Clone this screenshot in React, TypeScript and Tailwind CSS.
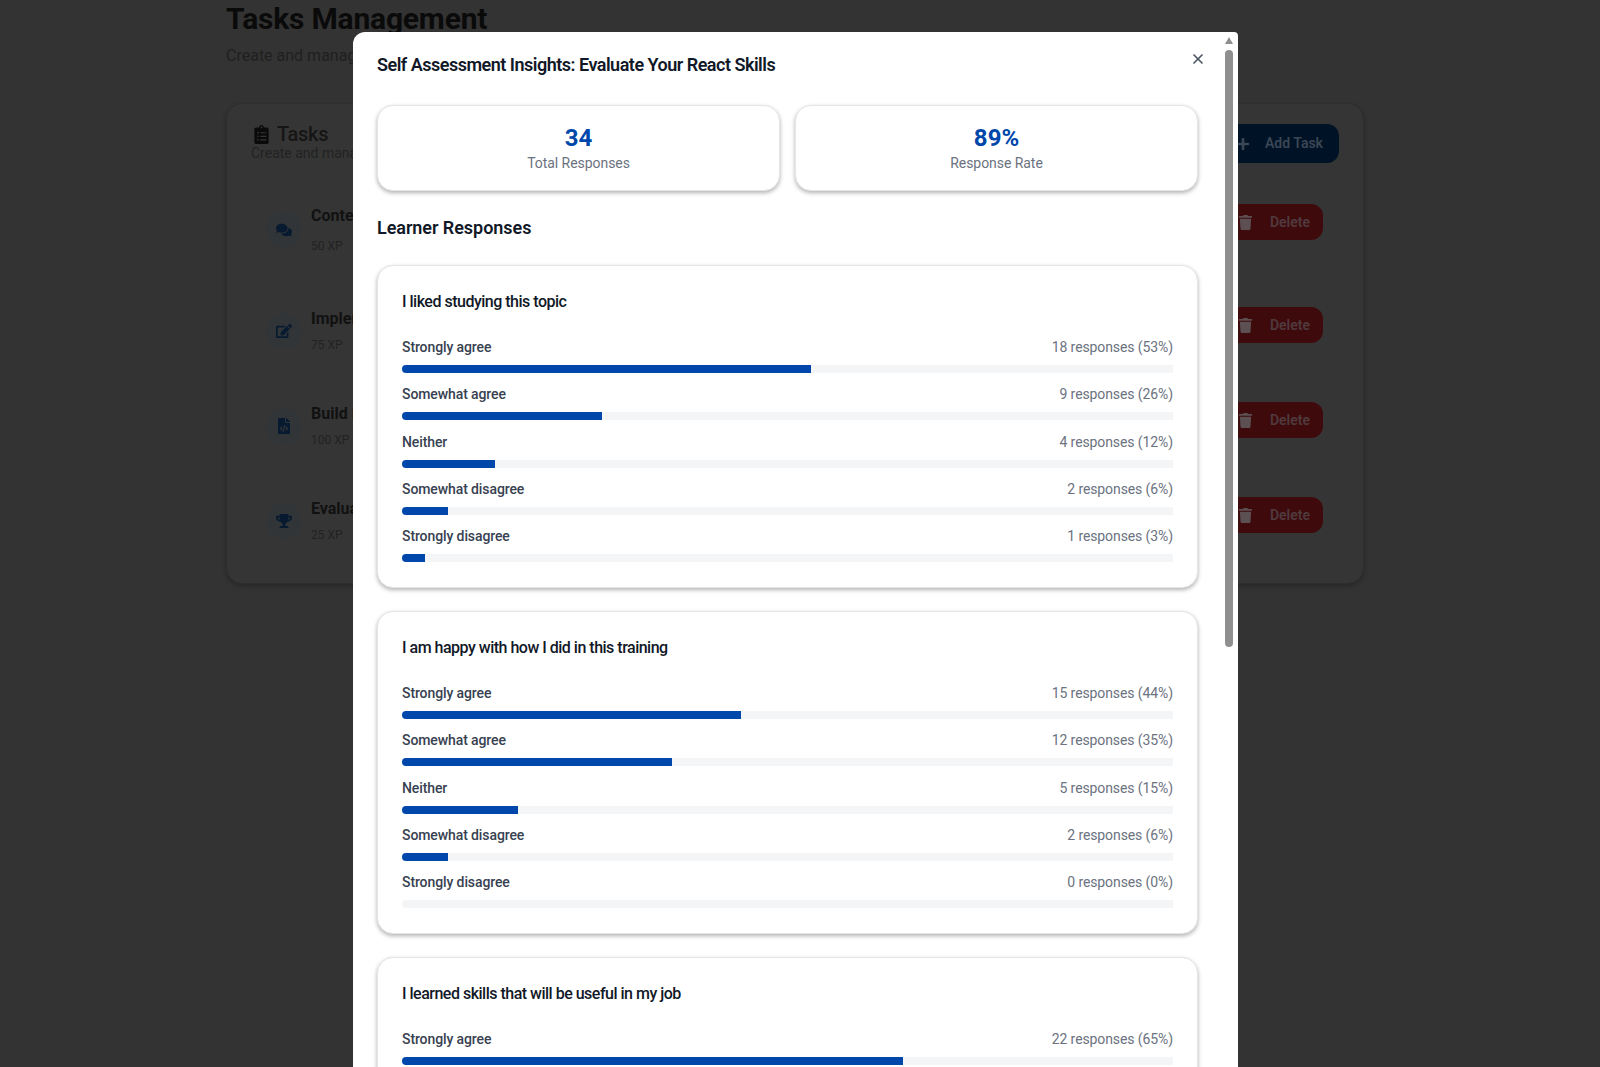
import { FaClipboardList, FaComments, FaEdit, FaFileCode, FaPlus, FaTrash, FaTrophy } from "react-icons/fa";
import { X } from "lucide-react";
import type { ComponentType } from "react";

type Row = { label: string; count: number; pct: number };

const LABELS = ["Strongly agree", "Somewhat agree", "Neither", "Somewhat disagree", "Strongly disagree"];

function rows(values: [number, number][]): Row[] {
  return values.map(([count, pct], i) => ({ label: LABELS[i], count, pct }));
}

const questions = [
  {
    title: "I liked studying this topic",
    rows: rows([[18, 53], [9, 26], [4, 12], [2, 6], [1, 3]]),
  },
  {
    title: "I am happy with how I did in this training",
    rows: rows([[15, 44], [12, 35], [5, 15], [2, 6], [0, 0]]),
  },
  {
    title: "I learned skills that will be useful in my job",
    rows: rows([[22, 65], [8, 24], [3, 9], [1, 3], [0, 0]]),
  },
];

const tasks: { name: string; xp: string; icon: ComponentType<{ size?: number; className?: string }>; h: string; gap: string }[] = [
  { name: "Content Review", xp: "50 XP", icon: FaComments, h: "h-[103px]", gap: "mt-[11px]" },
  { name: "Implement Feature", xp: "75 XP", icon: FaEdit, h: "h-[95px]", gap: "mt-[7px]" },
  { name: "Build Project", xp: "100 XP", icon: FaFileCode, h: "h-[95px]", gap: "mt-[7px]" },
  { name: "Evaluate Skills", xp: "25 XP", icon: FaTrophy, h: "h-[95px]", gap: "mt-[7px]" },
];

function Background() {
  return (
    <div className="h-[1067px] overflow-hidden bg-[#333333] pl-[226px] pr-[236px]">
      <h1 className="mt-[1px] text-[30px] leading-[36px] font-bold tracking-[-0.2px] text-[#0a0a0a]">Tasks Management</h1>
      <p className="mt-[7px] text-[16px] leading-[24px] text-[#202020]">Create and manage tasks for your learners</p>
      <div className="mt-[35px] h-[481px] rounded-[16px] border border-[#2e2e2e] bg-[#353535] pt-[19px] pr-[24px] pl-[24px] shadow-[0_2px_4px_rgba(0,0,0,0.25)]">
        <div className="flex items-start justify-between">
          <div>
            <div className="flex items-center gap-[6px] pl-[1px]">
              <FaClipboardList size={19} className="text-[#0a0a0a]" />
              <span className="text-[20px] leading-[23px] font-medium tracking-[-0.3px] text-[#151515]">Tasks</span>
            </div>
            <p className="text-[14px] leading-[14px] text-[#222222]">Create and manage tasks</p>
          </div>
          <div className="mt-[1px] flex h-[39px] w-[160px] items-center justify-end gap-[15px] rounded-[12px] bg-[#001226] pr-[16px] text-[14px] font-semibold text-[#3a4654]">
            <FaPlus size={14} />
            <span>Add Task</span>
          </div>
        </div>
        <div className="mt-[42px]">
          {tasks.map((t) => (
            <div key={t.xp} className={`flex items-start justify-between pr-[16px] ${t.h}`}>
              <div className="flex items-center gap-[9px] pl-[15px]">
                <div className="flex size-[36px] items-center justify-center rounded-full bg-[#323538]">
                  <t.icon size={16} className="text-[#071a30]" />
                </div>
                <div>
                  <p className="text-[16px] leading-[22px] font-bold text-[#111111]">{t.name}</p>
                  <p className={`text-[12px] leading-[16px] text-[#222222] ${t.gap}`}>{t.xp}</p>
                </div>
              </div>
              <div className="-mt-[1px] flex h-[36px] w-[140px] items-center justify-end gap-[17px] rounded-[12px] bg-[#3f0a0c] pr-[13px] text-[14px] font-semibold text-[#4f3a3e]">
                <FaTrash size={15} className="text-[#5c5052]" />
                <span>Delete</span>
              </div>
            </div>
          ))}
        </div>
      </div>
    </div>
  );
}

function Stat({ value, label }: { value: string; label: string }) {
  return (
    <div className="flex h-[86px] flex-col items-center justify-center rounded-[16px] border border-[#e5e5e5] bg-white shadow-[0_2px_4px_rgba(0,0,0,0.3)]">
      <div className="text-[24px] leading-[30px] font-bold text-[#0047ab]">{value}</div>
      <div className="text-[14px] leading-[20px] tracking-[-0.05px] text-[#6b7280]">{label}</div>
    </div>
  );
}

function QuestionCard({ title, rows }: { title: string; rows: Row[] }) {
  return (
    <div className="h-[323px] rounded-[16px] border border-[#e5e5e5] bg-white px-[24px] pt-[24px] shadow-[0_2px_4px_rgba(0,0,0,0.3)]">
      <h3 className="text-[16px] leading-[24px] font-medium tracking-[-0.5px] text-[#111827]">{title}</h3>
      <div className="mt-[23px]">
        {rows.map((r) => (
          <div key={r.label} className="h-[47.33px]">
            <div className="flex h-[21px] items-center justify-between text-[14px] tracking-[-0.1px]">
              <span className="font-medium text-[#374151]">{r.label}</span>
              <span className="text-[#6b7280]">
                {r.count} responses ({r.pct}%)
              </span>
            </div>
            <div className="mt-[7px] h-[8px] overflow-hidden rounded-l-full bg-[#f4f5f6]">
              <div className="h-full bg-[#0047ab]" style={{ width: `${r.pct}%` }} />
            </div>
          </div>
        ))}
      </div>
    </div>
  );
}

function Modal() {
  return (
    <div className="absolute top-[32px] left-[353px] h-[1035px] w-[885px] overflow-hidden rounded-tl-[12px] rounded-tr-[4px] bg-white">
      <div className="px-[24px] pt-[19px]">
        <h2 className="h-[28px] text-[18px] leading-[28px] font-semibold tracking-[-0.5px] text-[#111827]">
          Self Assessment Insights: Evaluate Your React Skills
        </h2>
        <button type="button" className="absolute top-[19px] right-[32px] text-[#4b5563]" aria-label="Close">
          <X size={16} strokeWidth={2.5} />
        </button>
        <div className="grid w-[821px] grid-cols-2 gap-[15px] pt-[26px]">
          <Stat value="34" label="Total Responses" />
          <Stat value="89%" label="Response Rate" />
        </div>
        <h3 className="mt-[23px] w-[821px] text-[18px] leading-[28px] font-semibold tracking-[-0.05px] text-[#111827]">Learner Responses</h3>
        <div className="mt-[23px] flex w-[821px] flex-col gap-[23px]">
          {questions.map((q) => (
            <QuestionCard key={q.title} title={q.title} rows={q.rows} />
          ))}
        </div>
      </div>
      {/* fake scrollbar, headless hides the native one */}
      <div className="absolute top-0 right-[5px] flex h-full w-[8px] flex-col items-center">
        <div className="mt-[5px] h-0 w-0 border-x-[4.5px] border-b-[7px] border-x-transparent border-b-[#8f8f8f]" />
        <div className="mt-[6px] h-[597px] w-[8px] rounded-full bg-[#8f8f8f]" />
      </div>
    </div>
  );
}

export default function App() {
  return (
    <div className="relative h-[1067px] overflow-hidden font-['Roboto',sans-serif]">
      <Background />
      <Modal />
    </div>
  );
}
